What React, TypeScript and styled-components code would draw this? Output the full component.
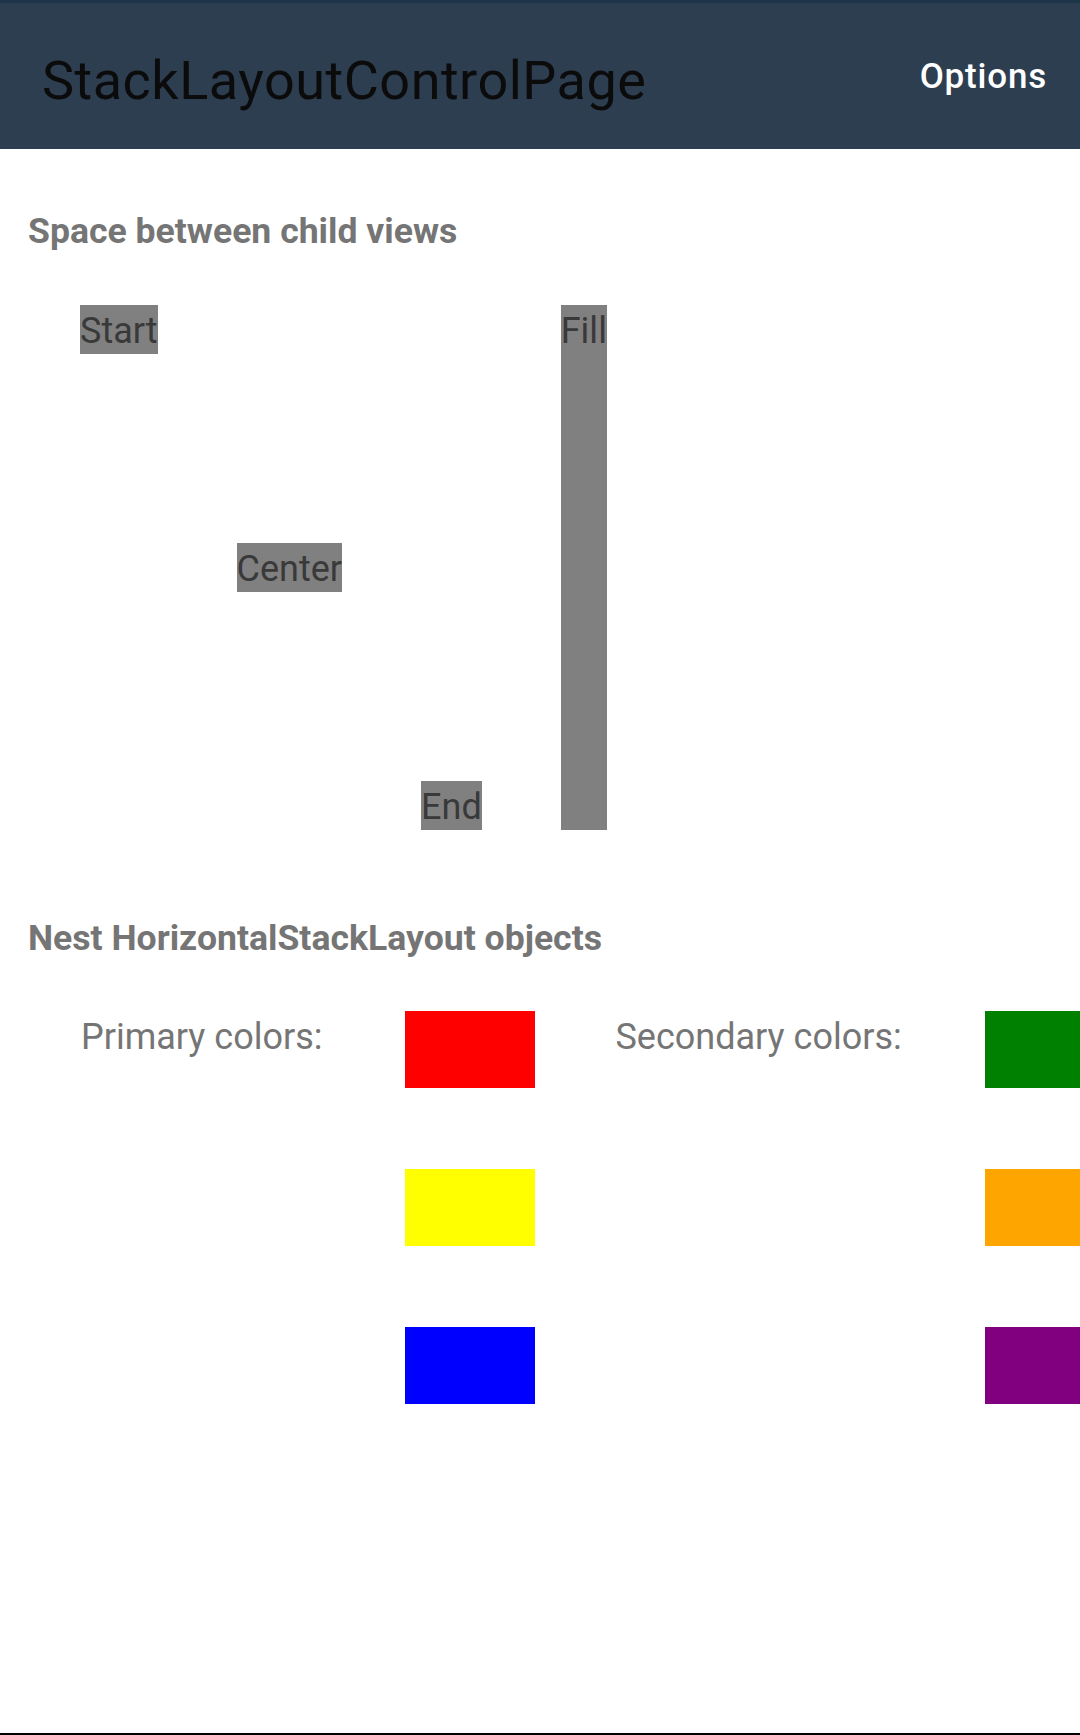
import React from 'react';
import styled, { createGlobalStyle } from 'styled-components';

const GlobalStyle = createGlobalStyle`
  html, body {
    margin: 0;
    padding: 0;
    background: #ffffff;
    overflow: hidden;
  }
  body {
    font-family: Roboto, "Noto Sans", "Liberation Sans", sans-serif;
  }
`;

const Screen = styled.div`
  width: 1080px;
  height: 1735px;
  box-sizing: border-box;
  display: flex;
  flex-direction: column;
  border-bottom: 2px solid #000000;
  overflow: hidden;
`;

const Toolbar = styled.header`
  height: 149px;
  box-sizing: border-box;
  flex-shrink: 0;
  border-top: 3px solid #1d3449;
  background: #2d3e50;
  display: flex;
  align-items: center;
  justify-content: space-between;
  padding: 8px 33px 0 42px;
`;

const PageTitle = styled.h1`
  margin: 0;
  font-size: 54px;
  font-weight: 400;
  letter-spacing: 0.5px;
  color: #0b0b0b;
`;

const ToolbarButton = styled.span`
  font-size: 35px;
  font-weight: 500;
  letter-spacing: 0.8px;
  color: #ffffff;
  margin-bottom: 8px;
`;

const Content = styled.main`
  flex: 1;
  display: flex;
  flex-direction: column;
  padding-left: 28px;
`;

const SectionTitle = styled.h2<{ $top: number }>`
  margin: ${(p) => p.$top}px 0 0 0;
  font-size: 35.6px;
  line-height: 42px;
  font-weight: 700;
  color: #757575;
`;

const SpacingRow = styled.div`
  display: flex;
  gap: 79px;
  height: 525px;
  margin: 53px 0 0 52px;
`;

const Chip = styled.span<{ $align: string }>`
  align-self: ${(p) => p.$align};
  background: #808080;
  color: #393939;
  font-size: 36px;
  line-height: 45px;
  padding-top: 4px;
  white-space: nowrap;
`;

const NestedRow = styled.div`
  display: flex;
  align-items: flex-start;
  gap: 80px;
  margin: 52px 0 0 53px;
  white-space: nowrap;
`;

const ColorLabel = styled.span`
  font-size: 36px;
  line-height: 49px;
  padding: 2px 3px 0 0;
  color: #757575;
`;

const Swatches = styled.div`
  display: flex;
  flex-direction: column;
  gap: 81px;
  flex-shrink: 0;
`;

const Swatch = styled.div<{ $color: string }>`
  width: 130px;
  height: 77px;
  background: ${(p) => p.$color};
`;

const primary = ['#ff0000', '#ffff00', '#0000ff'];
const secondary = ['#008000', '#ffa500', '#800080'];

const App = () => {
  return (
    <>
      <GlobalStyle />
      <Screen>
        <Toolbar>
          <PageTitle>StackLayoutControlPage</PageTitle>
          <ToolbarButton>Options</ToolbarButton>
        </Toolbar>
        <Content>
          <SectionTitle $top={61}>Space between child views</SectionTitle>
          <SpacingRow>
            <Chip $align="flex-start">Start</Chip>
            <Chip $align="center">Center</Chip>
            <Chip $align="flex-end">End</Chip>
            <Chip $align="stretch">Fill</Chip>
          </SpacingRow>
          <SectionTitle $top={87}>Nest HorizontalStackLayout objects</SectionTitle>
          <NestedRow>
            <ColorLabel>Primary colors:</ColorLabel>
            <Swatches>
              {primary.map((c) => (
                <Swatch key={c} $color={c} />
              ))}
            </Swatches>
            <ColorLabel>Secondary colors:</ColorLabel>
            <Swatches>
              {secondary.map((c) => (
                <Swatch key={c} $color={c} />
              ))}
            </Swatches>
          </NestedRow>
        </Content>
      </Screen>
    </>
  );
};

export default App;
